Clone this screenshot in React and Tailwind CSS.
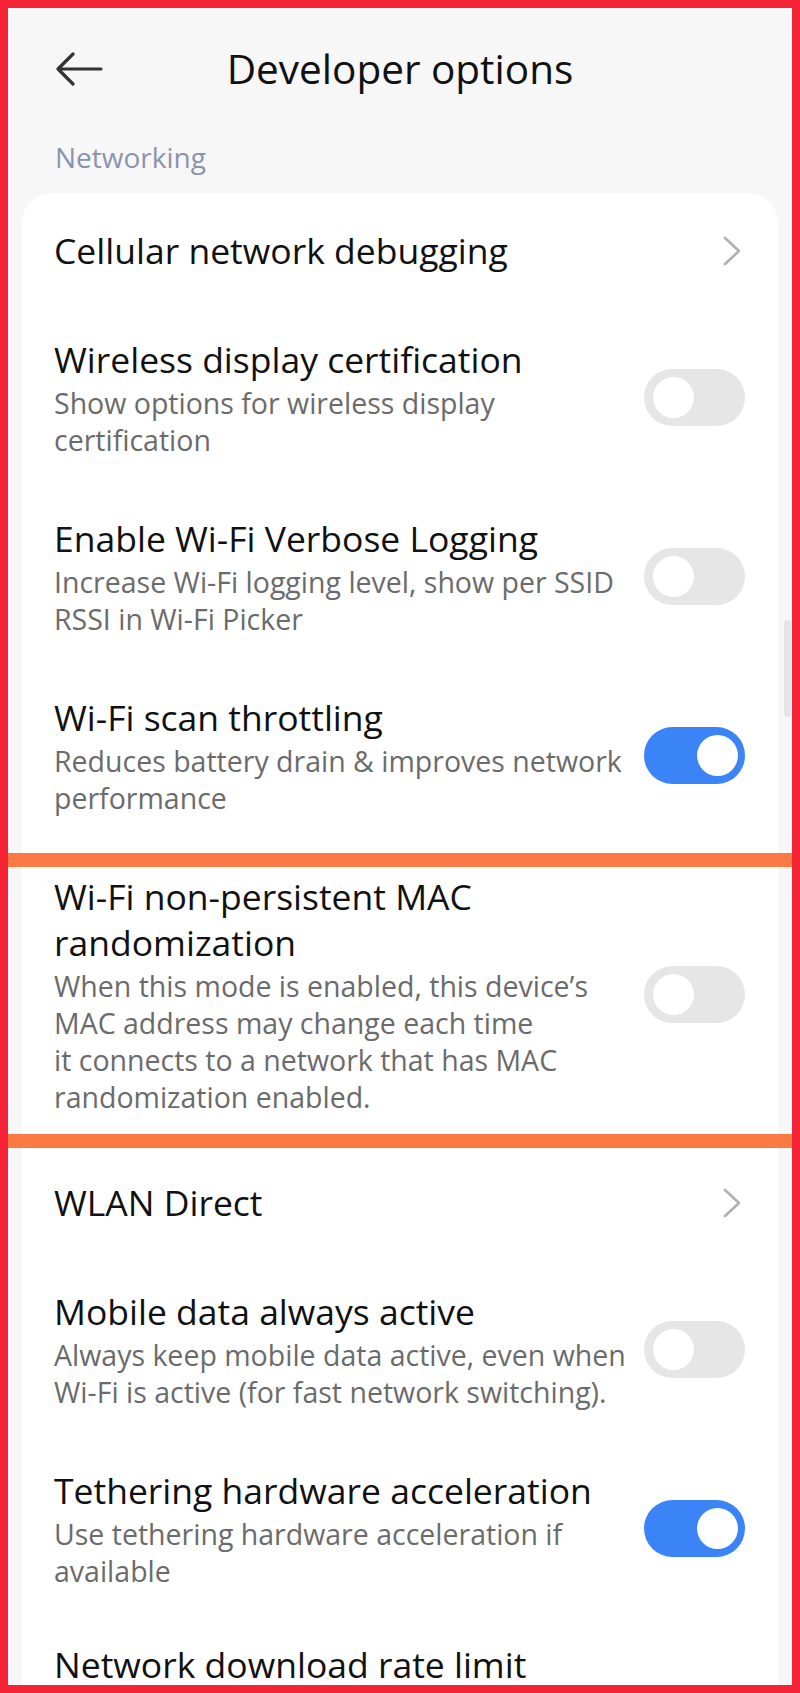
import React from "react";

const Toggle = ({ on }) => (
  <div
    className={
      "w-[101px] h-[57px] rounded-full flex items-center shrink-0 " +
      (on ? "bg-[#3a84f7] justify-end pr-[7px]" : "bg-[#e6e6e6] justify-start pl-[9px]")
    }
  >
    <div className="w-[41px] h-[41px] rounded-full bg-white" />
  </div>
);

const Chevron = () => (
  <svg width="20" height="30" viewBox="0 0 20 30" className="shrink-0 mr-[3px]">
    <polyline
      points="3,2 17,15 3,28"
      fill="none"
      stroke="#b0b0b0"
      strokeWidth="2.6"
      strokeLinecap="round"
      strokeLinejoin="round"
    />
  </svg>
);

const NavRow = ({ title }) => (
  <div className="flex items-center justify-between h-[116px] pl-[32px] pr-[33px]">
    <div className="text-[35.5px] leading-[46px] text-[#111] whitespace-nowrap mb-[2px]">{title}</div>
    <Chevron />
  </div>
);

const ToggleRow = ({ title, sub, on }) => (
  <div className="flex items-center justify-between pt-[27px] pb-[29px] pl-[32px] pr-[33px]">
    <div className="flex flex-col">
      <div className="flex flex-col mb-[3px]">
        {title.map((t, i) => (
          <div key={i} className="text-[35.5px] leading-[46px] text-[#111] whitespace-nowrap">
            {t}
          </div>
        ))}
      </div>
      {sub.map((s, i) => (
        <div key={i} className="text-[28.5px] leading-[37px] text-[#6b6b6b] whitespace-nowrap">
          {s}
        </div>
      ))}
    </div>
    <Toggle on={on} />
  </div>
);

export default function App() {
  return (
    <div
      className="relative w-[800px] h-[1693px] overflow-hidden bg-[#f7f7f7]"
      style={{ fontFamily: "'Open Sans', 'Noto Sans', sans-serif" }}
    >
      {/* header */}
      <div className="relative h-[139px] flex items-center justify-center">
        <svg
          width="48"
          height="34"
          viewBox="0 0 48 34"
          className="absolute left-[55px] top-[52px]"
        >
          <path
            d="M3 17 H46 M18 2 L3 17 L18 32"
            fill="none"
            stroke="#333"
            strokeWidth="3.2"
            strokeLinecap="round"
            strokeLinejoin="round"
          />
        </svg>
        <div className="text-[40.5px] leading-[46px] text-[#111] mb-[2px]">Developer options</div>
      </div>
      <div className="pl-[55px] text-[28px] leading-[36px] text-[#8c93ad] h-[54px]">Networking</div>

      {/* card */}
      <div className="mx-[22px] bg-white rounded-t-[30px] h-[1520px]">
        <NavRow title="Cellular network debugging" />
        <ToggleRow
          title={["Wireless display certification"]}
          sub={["Show options for wireless display", "certification"]}
        />
        <ToggleRow
          title={["Enable Wi-Fi Verbose Logging"]}
          sub={["Increase Wi-Fi logging level, show per SSID", "RSSI in Wi-Fi Picker"]}
        />
        <ToggleRow
          title={["Wi-Fi scan throttling"]}
          sub={["Reduces battery drain & improves network", "performance"]}
          on
        />
        <ToggleRow
          title={["Wi-Fi non-persistent MAC", "randomization"]}
          sub={[
            "When this mode is enabled, this device\u2019s",
            "MAC address may change each time",
            "it connects to a network that has MAC",
            "randomization enabled.",
          ]}
        />
        <NavRow title="WLAN Direct" />
        <ToggleRow
          title={["Mobile data always active"]}
          sub={["Always keep mobile data active, even when", "Wi-Fi is active (for fast network switching)."]}
        />
        <ToggleRow
          title={["Tethering hardware acceleration"]}
          sub={["Use tethering hardware acceleration if", "available"]}
          on
        />
        <div className="pt-[22px] pl-[32px] text-[35.5px] leading-[46px] text-[#111] whitespace-nowrap">
          Network download rate limit
        </div>
      </div>

      {/* scrollbar */}
      <div className="absolute left-[784px] top-[620px] w-[7px] h-[97px] rounded-full bg-[#e4e4e4]" />

      {/* annotation overlays */}
      <div className="absolute left-0 right-0 top-[853px] h-[14px] bg-[#fb7a43]" />
      <div className="absolute left-0 right-0 top-[1134px] h-[14px] bg-[#fb7a43]" />
      <div className="absolute inset-0 border-[8px] border-[#f42436] pointer-events-none" />
    </div>
  );
}
